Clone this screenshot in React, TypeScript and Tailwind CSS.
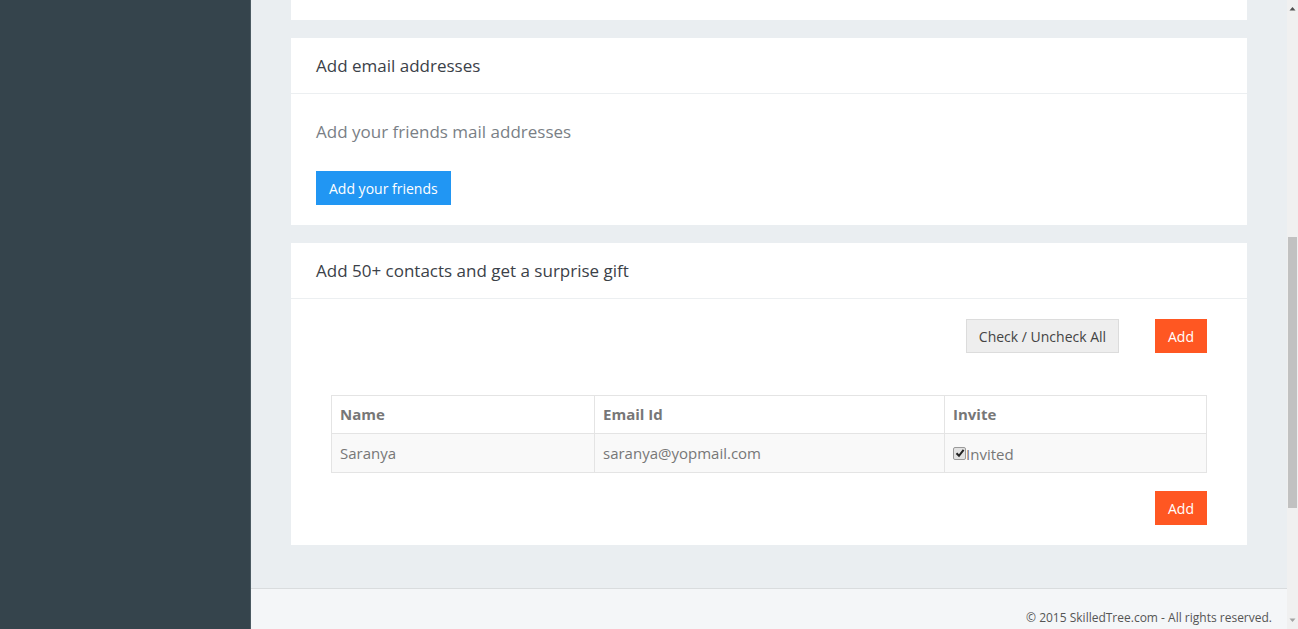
import React from "react";

export default function App() {
  return (
    <div
      className="flex h-[629px] w-[1298px] overflow-hidden bg-[#eaeef1] text-[#333]"
      style={{ fontFamily: '"Open Sans", "Noto Sans", sans-serif' }}
    >
      <aside className="w-[250px] shrink-0 bg-[#35444c]" />
      <div className="flex h-full w-[1037px] flex-col border-l border-[#4b5a62]">
        <main className="flex flex-1 flex-col gap-[18px] px-[40px]">
          <div className="h-[20px] bg-white" />
          <section className="bg-white">
            <div className="flex h-[56px] items-center border-b border-[#eceff1] px-[25px] pt-[1px] text-[17px] text-[#3b4148]">
              Add email addresses
            </div>
            <div className="px-[25px] pb-[20px] pt-[26px]">
              <p className="text-[17px] leading-[24px] text-[#7a7f86]">Add your friends mail addresses</p>
              <button className="mt-[27px] h-[34px] bg-[#2196f3] px-[13px] text-[14px] text-white">
                Add your friends
              </button>
            </div>
          </section>
          <section className="bg-white">
            <div className="flex h-[56px] items-center border-b border-[#eceff1] px-[25px] pt-[1px] text-[17px] text-[#3b4148]">
              Add 50+ contacts and get a surprise gift
            </div>
            <div className="px-[40px] pb-[20px] pt-[20px]">
              <div className="flex justify-end gap-[36px]">
                <button className="h-[34px] w-[153px] border border-[#dcdcdc] bg-[#eeeeee] text-[14px] text-[#444]">
                  Check / Uncheck All
                </button>
                <button className="h-[34px] w-[52px] bg-[#ff5722] text-[14px] text-white">Add</button>
              </div>
              <table className="mt-[42px] w-full border-collapse text-[15px] text-[#777]">
                <thead>
                  <tr className="h-[38px]">
                    <th className="w-[263px] border border-[#e4e4e4] px-[8px] text-left font-bold">Name</th>
                    <th className="w-[350px] border border-[#e4e4e4] px-[8px] text-left font-bold">Email Id</th>
                    <th className="border border-[#e4e4e4] px-[8px] text-left font-bold">Invite</th>
                  </tr>
                </thead>
                <tbody>
                  <tr className="h-[39px] bg-[#f9f9f9]">
                    <td className="border border-[#e4e4e4] px-[8px]">Saranya</td>
                    <td className="border border-[#e4e4e4] px-[8px]">saranya@yopmail.com</td>
                    <td className="border border-[#e4e4e4] px-[8px]">
                      <span className="flex items-center">
                        <span className="flex h-[13px] w-[13px] items-center justify-center rounded-[2px] border border-[#9a9a9a] bg-[#e2e2e2]">
                          <svg width="10" height="10" viewBox="0 0 10 10">
                            <path d="M1.5 5.2 L4 7.8 L8.6 1.8" stroke="#222" strokeWidth="2" fill="none" />
                          </svg>
                        </span>
                        <span className="pt-[2px]">Invited</span>
                      </span>
                    </td>
                  </tr>
                </tbody>
              </table>
              <div className="mt-[18px] flex justify-end">
                <button className="h-[34px] w-[52px] bg-[#ff5722] text-[14px] text-white">Add</button>
              </div>
            </div>
          </section>
        </main>
        <footer className="flex h-[41px] items-end justify-end border-t border-[#d9dcde] bg-[#f4f6f8] pb-[2px] pr-[15px] text-[12px] text-[#555]">
          © 2015 SkilledTree.com - All rights reserved.
        </footer>
      </div>
      <div className="flex h-full w-[11px] flex-col items-center bg-[#f0f0f0]">
        <svg width="7" height="14" viewBox="0 0 7 14" className="mt-[2px]">
          <path d="M0.5 8.5 L3.5 5 L6.5 8.5 Z" fill="#505050" />
        </svg>
        <div className="mt-[221px] h-[271px] w-[9px] bg-[#c1c1c1]" />
        <div className="flex-1" />
        <svg width="7" height="14" viewBox="0 0 7 14" className="mb-[2px]">
          <path d="M0.5 5.5 L3.5 9 L6.5 5.5 Z" fill="#a3a3a3" />
        </svg>
      </div>
    </div>
  );
}
